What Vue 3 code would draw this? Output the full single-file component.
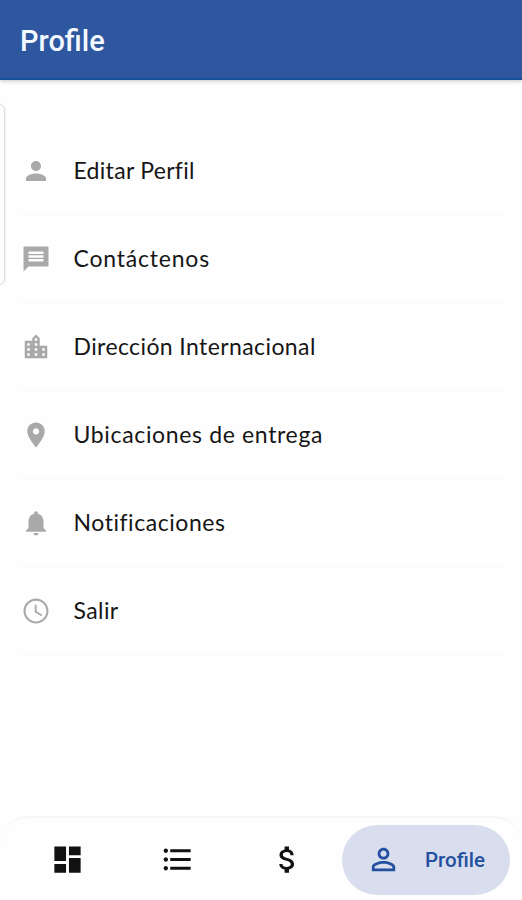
<script setup>
import { ref } from 'vue'

const title = 'Profile'
const active = ref('profile')

const items = [
	{
		id: 'edit',
		label: 'Editar Perfil',
		icon: 'M12 12c2.21 0 4-1.79 4-4s-1.79-4-4-4-4 1.79-4 4 1.79 4 4 4zm0 2c-2.67 0-8 1.34-8 4v2h16v-2c0-2.66-5.33-4-8-4z'
	},
	{
		id: 'contact',
		label: 'Contáctenos',
		icon: 'M21 2H3c-.6 0-1 .4-1 1v19l4-4h15c.6 0 1-.4 1-1V3c0-.6-.4-1-1-1zm-3 12H6v-2h12v2zm0-3H6V9h12v2zm0-3H6V6h12v2z'
	},
	{
		id: 'address',
		label: 'Dirección Internacional',
		icon: 'M15 11V5l-3-3-3 3v2H3v14h18V11h-6zm-8 8H5v-2h2v2zm0-4H5v-2h2v2zm0-4H5V9h2v2zm6 8h-2v-2h2v2zm0-4h-2v-2h2v2zm0-4h-2V9h2v2zm0-4h-2V5h2v2zm6 12h-2v-2h2v2zm0-4h-2v-2h2v2z'
	},
	{
		id: 'places',
		label: 'Ubicaciones de entrega',
		icon: 'M12 2C8.13 2 5 5.13 5 9c0 5.25 7 13 7 13s7-7.75 7-13c0-3.87-3.13-7-7-7zm0 9.5c-1.38 0-2.5-1.12-2.5-2.5s1.12-2.5 2.5-2.5 2.5 1.12 2.5 2.5-1.12 2.5-2.5 2.5z'
	},
	{
		id: 'alerts',
		label: 'Notificaciones',
		icon: 'M12 22c1.1 0 2-.9 2-2h-4c0 1.1.89 2 2 2zm6-6v-5c0-3.07-1.64-5.64-4.5-6.32V4c0-.83-.67-1.5-1.5-1.5s-1.5.67-1.5 1.5v.68C7.63 5.36 6 7.92 6 11v5l-2 2v1h16v-1l-2-2z'
	},
	{
		id: 'exit',
		label: 'Salir',
		icon: 'M11.99 2C6.47 2 2 6.48 2 12s4.47 10 9.99 10C17.52 22 22 17.52 22 12S17.52 2 11.99 2zM12 20.3c-4.6 0-8.3-3.7-8.3-8.3s3.7-8.3 8.3-8.3 8.3 3.7 8.3 8.3-3.7 8.3-8.3 8.3zm.5-13.3H11v6l5.25 3.15.75-1.23-4.5-2.67z'
	}
]

const tabs = [
	{ id: 'home', icon: 'M3 13h8V3H3v10zm0 8h8v-6H3v6zm10 0h8V11h-8v10zm0-18v6h8V3h-8z' },
	{
		id: 'list',
		icon: 'M4 10.5c-.83 0-1.5.67-1.5 1.5s.67 1.5 1.5 1.5 1.5-.67 1.5-1.5-.67-1.5-1.5-1.5zm0-6c-.83 0-1.5.67-1.5 1.5S3.17 7.5 4 7.5 5.5 6.83 5.5 6 4.83 4.5 4 4.5zm0 12c-.83 0-1.5.68-1.5 1.5s.68 1.5 1.5 1.5 1.5-.68 1.5-1.5-.67-1.5-1.5-1.5zM7 19h14v-2H7v2zm0-6h14v-2H7v2zm0-8v2h14V5H7z'
	},
	{
		id: 'money',
		icon: 'M11.8 10.9c-2.27-.59-3-1.2-3-2.15 0-1.09 1.01-1.85 2.7-1.85 1.78 0 2.44.85 2.5 2.1h2.21c-.07-1.72-1.12-3.3-3.21-3.81V3h-3v2.16c-1.94.42-3.5 1.68-3.5 3.61 0 2.31 1.91 3.46 4.7 4.13 2.5.6 3 1.48 3 2.41 0 .69-.49 1.79-2.7 1.79-2.06 0-2.87-.92-2.98-2.1h-2.2c.12 2.19 1.76 3.42 3.68 3.83V21h3v-2.15c1.95-.37 3.5-1.5 3.5-3.55 0-2.84-2.43-3.81-4.7-4.4z'
	},
	{
		id: 'profile',
		label: 'Profile',
		icon: 'M12 5.9c1.16 0 2.1.94 2.1 2.1s-.94 2.1-2.1 2.1S9.9 9.16 9.9 8s.94-2.1 2.1-2.1m0 9c2.97 0 6.1 1.46 6.1 2.1v1.1H5.9V17c0-.64 3.13-2.1 6.1-2.1M12 4C9.79 4 8 5.79 8 8s1.79 4 4 4 4-1.79 4-4-1.79-4-4-4zm0 9c-2.67 0-8 1.34-8 4v3h16v-3c0-2.66-5.33-4-8-4z'
	}
]
</script>

<template>
	<div class="screen">
		<header class="topbar">
			<h1>{{ title }}</h1>
		</header>

		<main class="content">
			<div class="edge-handle"></div>
			<ul class="menu">
				<li v-for="item in items" :key="item.id" :class="['menu-item', item.id]">
					<svg class="menu-icon" viewBox="0 0 24 24"><path :d="item.icon" /></svg>
					<span class="menu-label">{{ item.label }}</span>
				</li>
			</ul>
		</main>

		<nav class="tabbar">
			<button
				v-for="tab in tabs"
				:key="tab.id"
				:class="['tab', tab.id, { active: active === tab.id }]"
				@click="active = tab.id"
			>
				<svg class="tab-icon" viewBox="0 0 24 24"><path :d="tab.icon" /></svg>
				<span v-if="tab.label" class="tab-label">{{ tab.label }}</span>
			</button>
		</nav>
	</div>
</template>

<style>
body {
	margin: 0;
	background: #fefefe;
}
</style>

<style scoped>
.screen {
	display: flex;
	flex-direction: column;
	height: 900px;
	overflow: hidden;
	background: #fefefe;
	font-family: Roboto, "Liberation Sans", sans-serif;
}
.topbar {
	display: flex;
	align-items: center;
	box-sizing: border-box;
	flex: none;
	height: 80px;
	padding: 3px 20px 0;
	background: #2e579f;
	border-bottom: 2px solid #17509a;
	box-shadow: 0 1px 4px rgba(70, 50, 80, 0.3);
}
h1 {
	margin: 0;
	color: #f4f8ff;
	font-size: 29px;
	font-weight: 500;
	line-height: 36px;
}
.content {
	position: relative;
	flex: 1;
	padding: 47px 20px 0 22px;
}
.edge-handle {
	position: absolute;
	top: 24px;
	left: -12px;
	width: 15px;
	height: 179px;
	border: 1px solid #dcdcdc;
	border-radius: 6px;
	box-shadow: 0 0 2px #e4e4e4;
}
.menu {
	margin: 0;
	padding: 0;
	list-style: none;
}
.menu-item {
	display: flex;
	align-items: center;
	box-sizing: border-box;
	height: 88px;
	border-bottom: 1px solid #f8f8f8;
}
.menu-icon {
	width: 30px;
	height: 30px;
	margin-left: -1.5px;
	fill: #a9a9a9;
}
.menu-label {
	margin: 0 0 2px 23px;
	color: #161616;
	font-family: Lato, Roboto, sans-serif;
	font-size: 23px;
	line-height: 30px;
	letter-spacing: 0.4px;
	white-space: nowrap;
}
.edit .menu-label {
	letter-spacing: 0.3px;
}
.contact .menu-label {
	letter-spacing: 0.8px;
}
.places .menu-label {
	letter-spacing: 0.65px;
}
.alerts .menu-label {
	letter-spacing: 0.55px;
}
.tabbar {
	display: flex;
	align-items: center;
	box-sizing: border-box;
	flex: none;
	height: 84px;
	padding: 1px 12px 0;
	border-top: 2px solid #f6f6f6;
	border-radius: 28px 28px 0 0;
	background: #fefefe;
}
.tab {
	display: flex;
	align-items: center;
	justify-content: center;
	box-sizing: border-box;
	width: 110px;
	height: 70px;
	padding: 0;
	border: 0;
	background: none;
	color: #111;
	font-family: inherit;
}
.tab.active {
	justify-content: flex-start;
	width: 168px;
	padding-left: 24px;
	border-radius: 35px;
	background: #d8deed;
	color: #2450a0;
}
.tab-icon {
	flex: none;
	width: 35px;
	height: 35px;
	fill: currentColor;
}
.tab-label {
	margin-left: 24px;
	font-size: 20.5px;
	font-weight: 500;
}
</style>
